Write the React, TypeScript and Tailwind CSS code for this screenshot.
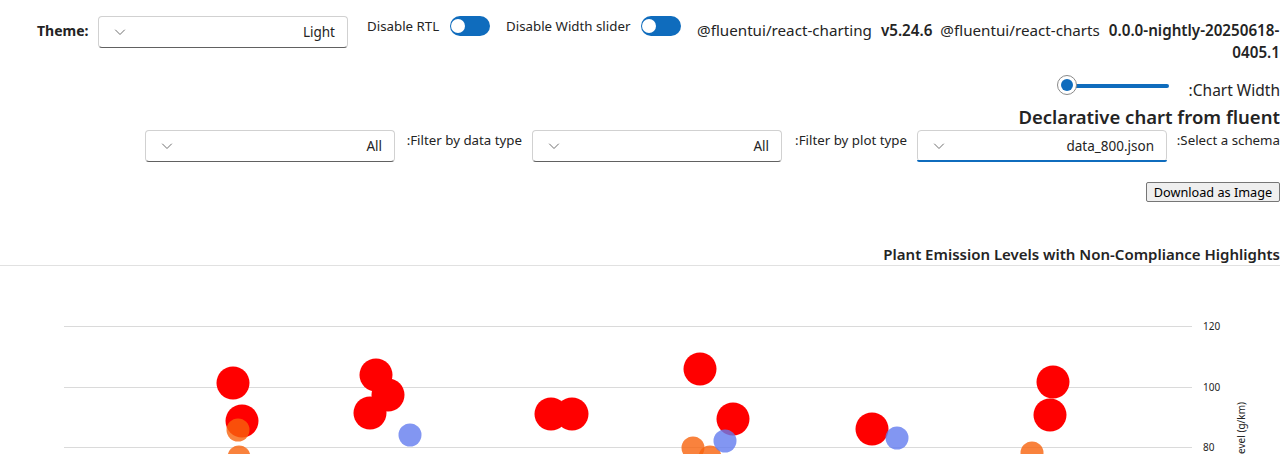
import React from "react";

const font = { fontFamily: '"Segoe UI", "Noto Sans", sans-serif' };

function Chevron() {
  return (
    <svg width="12" height="12" viewBox="0 0 12 12" fill="none">
      <path d="M1.5 4 L6 8.5 L10.5 4" stroke="#707070" strokeWidth="1" strokeLinecap="round" strokeLinejoin="round" />
    </svg>
  );
}

function Dropdown({ value, focused = false }: { value: string; focused?: boolean }) {
  return (
    <div
      className={
        "relative flex h-8 w-[250px] shrink-0 items-center justify-between rounded-[4px] border border-[#d1d1d1] bg-white pl-[15px] pr-[12px] " +
        (focused ? "border-b-[#d1d1d1]" : "border-b-[#616161]")
      }
    >
      <Chevron />
      <span className="text-[13.5px] leading-5 text-[#242424]">{value}</span>
      {focused && (
        <div className="absolute -bottom-px -left-px -right-px h-[2px] rounded-b-[4px] bg-[#0f6cbd]" />
      )}
    </div>
  );
}

function Toggle() {
  return (
    <div className="flex h-5 w-10 shrink-0 items-center rounded-full bg-[#0f6cbd] pl-[1px]">
      <div className="h-[14px] w-[14px] rounded-full bg-white" />
    </div>
  );
}

const reds: [number, number][] = [
  [233, 117], [242, 155], [376, 109], [388, 129], [370, 147], [551, 148], [572, 148],
  [700, 103], [733, 153], [872, 163], [1053, 116], [1050, 149],
];
const oranges: [number, number][] = [[238, 164], [239, 191], [693, 182], [710, 191], [1032, 187]];
const blues: [number, number][] = [[410, 169], [725, 175], [897, 172]];

export default function App() {
  return (
    <div className="w-[1280px] overflow-hidden bg-white text-[#242424]" style={font}>
      {/* Row 1 */}
      <div className="flex items-start pt-4 pl-[37px]">
        <div className="flex h-[29px] w-[53px] items-center whitespace-nowrap text-[14px] font-bold">Theme:</div>
        <div className="ml-2">
          <Dropdown value="Light" />
        </div>
        <div className="ml-[19px] flex h-5 items-center">
          <span className="w-[71px] whitespace-nowrap text-[13.3px] leading-5">Disable RTL</span>
          <div className="ml-3">
            <Toggle />
          </div>
        </div>
        <div className="ml-4 flex h-5 items-center">
          <span className="w-[123px] whitespace-nowrap text-[13.3px] leading-5">Disable Width slider</span>
          <div className="ml-3">
            <Toggle />
          </div>
        </div>
        <div className="ml-4 mt-[3px] flex-1 text-right text-[15.2px] leading-[22px]">
          <div className="flex whitespace-nowrap">
            <span>@fluentui/react-charting</span>
            <span className="ml-[9px] font-semibold">v5.24.6</span>
            <span className="ml-2">@fluentui/react-charts</span>
            <span className="ml-[9px] font-semibold">0.0.0-nightly-20250618-</span>
          </div>
          <div className="font-semibold">0405.1</div>
        </div>
      </div>

      {/* Row 2: slider */}
      <div className="mt-[7px] flex h-8 items-start justify-end">
        <div className="relative flex h-8 w-[112px] items-center">
          <div className="ml-[9px] h-1 w-[103px] rounded-full bg-[#0f6cbd]" />
          <div className="absolute left-0 top-[5px] flex h-5 w-5 items-center justify-center rounded-full border border-[#8a8a8a] bg-white">
            <div className="h-3 w-3 rounded-full bg-[#0f6cbd]" />
          </div>
        </div>
        <div className="ml-[20px] mt-[9px] whitespace-nowrap text-[15.5px] leading-[22px]" dir="rtl">
          Chart Width:
        </div>
      </div>

      {/* Row 3: title */}
      <div className="mt-[2px] whitespace-nowrap text-right text-[18.5px] font-semibold leading-[26px]">
        Declarative chart from fluent
      </div>

      {/* Row 4: filters */}
      <div className="flex items-start justify-end">
        <Dropdown value="All" />
        <div className="ml-3 w-[115px] shrink-0 whitespace-nowrap text-[13.3px] leading-5" dir="rtl">
          Filter by data type:
        </div>
        <div className="ml-[10px]">
          <Dropdown value="All" />
        </div>
        <div className="ml-3 w-[113px] shrink-0 whitespace-nowrap text-[13.3px] leading-5" dir="rtl">
          Filter by plot type:
        </div>
        <div className="ml-[10px]">
          <Dropdown value="data_800.json" focused />
        </div>
        <div className="ml-3 w-[101px] shrink-0 whitespace-nowrap text-[13.3px] leading-5" dir="rtl">
          Select a schema:
        </div>
      </div>

      {/* Row 5: download */}
      <div className="mt-[20px] flex justify-end">
        <button
          className="h-5 w-[134px] rounded-[2px] border border-[#767676] bg-[#efefef] text-center text-[12.7px] leading-4 text-black"
          style={font}
        >
          Download as Image
        </button>
      </div>

      {/* Chart title */}
      <div className="mt-[41px] whitespace-nowrap border-b border-[#e1e1e1] text-right text-[15px] font-semibold leading-[22px]">
        Plant Emission Levels with Non-Compliance Highlights
      </div>

      {/* Chart */}
      <svg width="1280" height="188" className="block">
        {[60, 121, 181].map((y) => (
          <line key={y} x1="64" x2="1192" y1={y + 0.5} y2={y + 0.5} stroke="#dadada" strokeWidth="1" />
        ))}
        {[
          [60, "120"],
          [121, "100"],
          [181, "80"],
        ].map(([y, t]) => (
          <text key={t as string} x="1203" y={(y as number) + 1} dominantBaseline="middle" fontSize="10" fill="#242424" style={font}>
            {t}
          </text>
        ))}
        <text
          transform="translate(1242,136) rotate(-90)"
          textAnchor="end"
          dominantBaseline="middle"
          fontSize="10"
          fill="#242424"
          style={font}
        >
          Emission Level (g/km)
        </text>
        {reds.map(([x, y], i) => (
          <circle key={"r" + i} cx={x} cy={y} r="16.5" fill="#ff0000" />
        ))}
        {oranges.map(([x, y], i) => (
          <circle key={"o" + i} cx={x} cy={y} r="11.5" fill="#f7630c" fillOpacity="0.8" />
        ))}
        {blues.map(([x, y], i) => (
          <circle key={"b" + i} cx={x} cy={y} r="11.5" fill="#637cef" fillOpacity="0.8" />
        ))}
      </svg>
    </div>
  );
}
